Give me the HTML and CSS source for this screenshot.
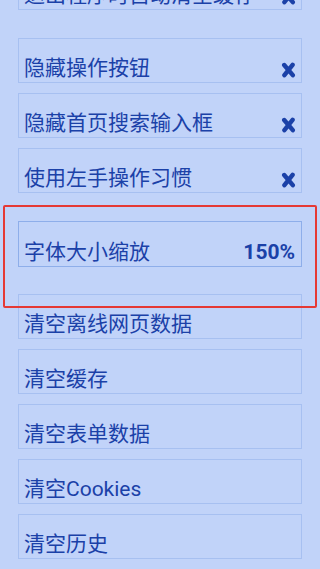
FILE: index.html
```html
<!DOCTYPE html>
<html lang="zh-CN">
<head>
  <meta charset="UTF-8" />
  <meta name="viewport" content="width=device-width, initial-scale=1.0"/>
  <title>设置</title>
  <link rel="stylesheet" href="styles.css">
</head>
<body>
  <div class="settings">
    <div class="group">
      <div class="item">
        <span class="label">退出程序时自动清空缓存</span>
        <svg class="off" viewBox="0 0 15 16"><path d="M3.2 3 L11.8 13.2 M11.6 2.8 L3.4 13.2"/></svg>
      </div>
    </div>

    <div class="group">
      <div class="item">
        <span class="label">隐藏操作按钮</span>
        <svg class="off" viewBox="0 0 15 16"><path d="M3.2 3 L11.8 13.2 M11.6 2.8 L3.4 13.2"/></svg>
      </div>
      <div class="item">
        <span class="label">隐藏首页搜索输入框</span>
        <svg class="off" viewBox="0 0 15 16"><path d="M3.2 3 L11.8 13.2 M11.6 2.8 L3.4 13.2"/></svg>
      </div>
      <div class="item">
        <span class="label">使用左手操作习惯</span>
        <svg class="off" viewBox="0 0 15 16"><path d="M3.2 3 L11.8 13.2 M11.6 2.8 L3.4 13.2"/></svg>
      </div>
    </div>

    <div class="group highlight">
      <div class="item selected">
        <span class="label">字体大小缩放</span>
        <span class="value">150%</span>
      </div>
    </div>

    <div class="group">
      <div class="item"><span class="label">清空离线网页数据</span></div>
      <div class="item"><span class="label">清空缓存</span></div>
      <div class="item"><span class="label">清空表单数据</span></div>
      <div class="item"><span class="label">清空Cookies</span></div>
      <div class="item"><span class="label">清空历史</span></div>
    </div>
  </div>
</body>
</html>
```

FILE: styles.css
```css
body {
  margin: 0;
  background: #c1d3f9;
  font-family: Roboto, "Noto Sans CJK SC", sans-serif;
  color: #1b41a8;
  overflow: hidden;
}
.settings {
  margin-top: -35px;
  padding: 0 18px;
}
.group {
  margin-bottom: 28px;
}
.group .item:last-child {
  margin-bottom: 0;
}
.item {
  display: flex;
  align-items: center;
  justify-content: space-between;
  height: 43px;
  box-sizing: content-box;
  border: 1px solid #a7c0f1;
  padding: 0 5px 0 5px;
  margin-bottom: 10px;
}
.label {
  font-size: 21px;
  line-height: 25px;
  margin-top: 16px;
  white-space: nowrap;
}
.off {
  width: 15px;
  height: 16px;
  margin-top: 18px;
}
.off path {
  stroke: #1b41a8;
  stroke-width: 4.4;
  stroke-linecap: round;
  fill: none;
}
.selected {
  height: 44px;
  border-color: #8eaeea;
}
.value {
  font-size: 21px;
  font-weight: 700;
  line-height: 25px;
  margin-top: 16px;
  margin-right: 1px;
}
.highlight {
  position: relative;
  margin-bottom: 27px;
}
.highlight::after {
  content: "";
  position: absolute;
  top: -16px;
  bottom: -41px;
  left: -15px;
  right: -15px;
  border: 2px solid #e53935;
  border-radius: 2px;
  pointer-events: none;
}
```
